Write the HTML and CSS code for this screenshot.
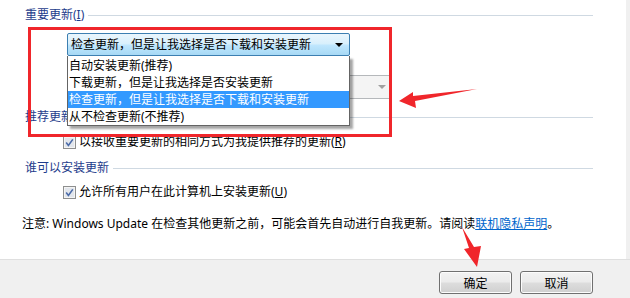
FILE: index.html
```html
<!DOCTYPE html>
<html lang="zh-CN">
<head>
  <meta charset="utf-8" />
  <title>更改设置</title>
  <link rel="stylesheet" href="styles.css">
</head>
<body>
  <div class="window">
    <div class="panel">
      <div class="group-title"><span>重要更新(<u>I</u>)</span></div>
      <div class="combo">
        <span class="combo-text">检查更新，但是让我选择是否下载和安装更新</span>
        <span class="combo-arrow"></span>
      </div>
      <div class="combo combo-disabled">
        <span class="combo-arrow"></span>
      </div>

      <div class="group-title group-next"><span>推荐更新</span></div>
      <div class="check-row">
        <span class="checkbox">
          <svg width="13" height="13" viewBox="0 0 13 13">
            <rect x="0.5" y="0.5" width="12" height="12" fill="#f4f4f4" stroke="#8e8f8f"/>
            <rect x="2" y="2" width="9" height="9" fill="#e2e6ec"/>
            <path d="M3.2 6.6 L5.4 9.4 L9.8 3.4" fill="none" stroke="#4a6aa8" stroke-width="1.6"/>
          </svg>
        </span>
        <span>以接收重要更新的相同方式为我提供推荐的更新(<u>R</u>)</span>
      </div>

      <div class="group-title group-next"><span>谁可以安装更新</span></div>
      <div class="check-row check-row-last">
        <span class="checkbox">
          <svg width="13" height="13" viewBox="0 0 13 13">
            <rect x="0.5" y="0.5" width="12" height="12" fill="#f4f4f4" stroke="#8e8f8f"/>
            <rect x="2" y="2" width="9" height="9" fill="#e2e6ec"/>
            <path d="M3.2 6.6 L5.4 9.4 L9.8 3.4" fill="none" stroke="#4a6aa8" stroke-width="1.6"/>
          </svg>
        </span>
        <span>允许所有用户在此计算机上安装更新(<u>U</u>)</span>
      </div>

      <p class="note">注意: Windows Update 在检查其他更新之前，可能会首先自动进行自我更新。请阅读<a href="#">联机隐私声明</a>。</p>
    </div>

    <div class="footer">
      <button class="btn">确定</button>
      <button class="btn">取消</button>
    </div>

    <!-- 展开的下拉列表 -->
    <ul class="dropdown-list">
      <li>自动安装更新(推荐)</li>
      <li>下载更新，但是让我选择是否安装更新</li>
      <li class="selected">检查更新，但是让我选择是否下载和安装更新</li>
      <li>从不检查更新(不推荐)</li>
    </ul>

    <!-- 标注 -->
    <div class="callout-box"></div>
    <svg class="callout-arrows" width="630" height="298" viewBox="0 0 630 298">
      <polygon points="399,101 413,92 413,96 477,89 415,101 416,108" fill="#f0262b"/>
      <polygon points="462,227 474,247 481,246 477,267 464,249 469,248" fill="#f0262b"/>
    </svg>
  </div>
</body>
</html>
```

FILE: styles.css
```css
body{
  margin: 0;
  background-color: #f0f0f0;
  font-family: "Noto Sans", "Noto Sans CJK SC", sans-serif;
  font-size: 12px;
  color: #000;
}
.window{
  position: relative;
  width: 630px;
  height: 298px;
  overflow: hidden;
}
.panel{
  width: 626px;
  height: 259px;
  padding: 7px 33px 0px 22px;
  box-sizing: border-box;
  background-color: #fff;
}
.group-title{
  display: flex;
  align-items: center;
  gap: 4px;
  height: 16px;
  margin: 0px 0px 0px 3px;
  color: #1e3c8c;
  line-height: 16px;
  white-space: nowrap;
}
.group-title::after{
  content: "";
  flex: 1;
  height: 1px;
  background-color: #cfd9e2;
}
.group-next{
  margin-top: 10px;
}
.group-title u,
.check-row u{
  text-decoration: underline;
}
.combo{
  position: relative;
  width: 283px;
  height: 23px;
  margin: 10px 0px 0px 45px;
  box-sizing: border-box;
  border: 1px solid #3c7fb1;
  border-radius: 2px;
  background: linear-gradient(#eaf6fd 0%, #d9f0fc 45%, #bee6fd 55%, #a7d9f5 100%);
  line-height: 21px;
}
.combo-text{
  padding-left: 3px;
  white-space: nowrap;
}
.combo-arrow{
  position: absolute;
  right: 6px;
  top: 9px;
  width: 0;
  height: 0;
  border-left: 4px solid transparent;
  border-right: 4px solid transparent;
  border-top: 4px solid #000;
}
.combo-disabled{
  width: 92px;
  height: 24px;
  margin: 19px 0px 0px 278px;
  border-color: #b5b8bb;
  background: #f4f4f4;
}
.combo-disabled .combo-arrow{
  right: 5px;
  border-top-color: #a0a0a0;
}
.check-row{
  display: flex;
  align-items: center;
  gap: 3px;
  height: 16px;
  margin: 9px 0px 0px 41px;
  line-height: 16px;
  white-space: nowrap;
}
.check-row-last{
  margin-top: 8px;
}
.checkbox{
  display: flex;
  width: 13px;
  height: 13px;
  margin-top: 1px;
}
.note{
  height: 16px;
  margin: 16px 0px 0px 0px;
  line-height: 16px;
  white-space: nowrap;
}
.note a{
  color: #0066cc;
  text-decoration: underline;
}
.footer{
  display: flex;
  justify-content: flex-end;
  gap: 8px;
  height: 39px;
  padding: 11px 37px 0px 0px;
  box-sizing: border-box;
  border-top: 1px solid #dfdfdf;
}
.btn{
  width: 73px;
  height: 23px;
  padding: 0;
  border: 1px solid #707070;
  border-radius: 3px;
  background: linear-gradient(#f2f2f2 0%, #ebebeb 48%, #dddddd 52%, #cfcfcf 100%);
  box-shadow: inset 0 0 0 1px #fcfcfc;
  font-family: "Noto Sans CJK SC", sans-serif;
  font-size: 12px;
  color: #000;
}
.dropdown-list{
  position: absolute;
  left: 67px;
  top: 56px;
  width: 283px;
  height: 70px;
  margin: 0;
  padding: 1px 0px 0px 0px;
  box-sizing: border-box;
  list-style: none;
  border: 1px solid #646464;
  border-top: none;
  background-color: #fff;
  box-shadow: 3px 3px 2px rgba(0, 0, 0, 0.35);
}
.dropdown-list li{
  height: 17px;
  padding-left: 1px;
  line-height: 17px;
  white-space: nowrap;
}
.dropdown-list .selected{
  background-color: #3399ff;
  color: #fff;
}
.callout-box{
  position: absolute;
  left: 28px;
  top: 27px;
  width: 364px;
  height: 110px;
  box-sizing: border-box;
  border: 3px solid #f0262b;
}
.callout-arrows{
  position: absolute;
  left: 0;
  top: 0;
  pointer-events: none;
}
```
